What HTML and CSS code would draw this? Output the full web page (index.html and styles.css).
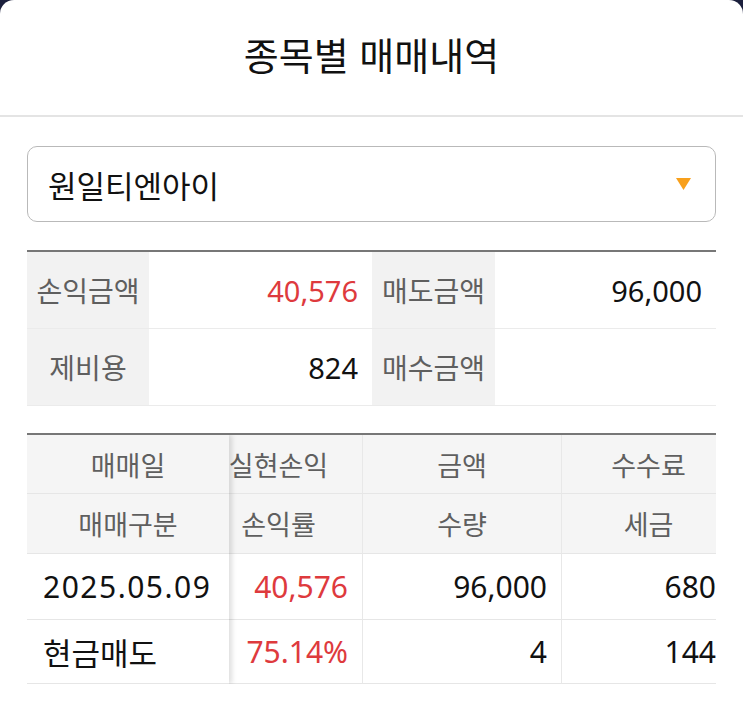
FILE: index.html
```html
<!DOCTYPE html>
<html lang="ko">
<head>
<meta charset="utf-8">
<link rel="stylesheet" href="styles.css">
</head>
<body>
<div class="sheet">
  <header class="title-bar"><h1 class="title">종목별 매매내역</h1></header>

  <div class="select">
    <span class="select-text">원일티엔아이</span>
    <svg class="caret" width="15" height="12" viewBox="0 0 15 12"><polygon points="0,0 15,0 7.5,12" fill="#f8a01c"/></svg>
  </div>

  <div class="summary">
    <div class="s-label">손익금액</div>
    <div class="s-value red">40,576</div>
    <div class="s-label">매도금액</div>
    <div class="s-value">96,000</div>
    <div class="s-label">제비용</div>
    <div class="s-value">824</div>
    <div class="s-label">매수금액</div>
    <div class="s-value"></div>
  </div>

  <div class="detail">
    <div class="fixed">
      <div class="cell head h1 center">매매일</div>
      <div class="cell head h2 center">매매구분</div>
      <div class="cell data d1 left num date">2025.05.09</div>
      <div class="cell data d2 left kr">현금매도</div>
    </div>
    <div class="scroll">
      <div class="scroll-inner">
        <div class="cell head h1 center">실현손익</div>
        <div class="cell head h1 center vl">금액</div>
        <div class="cell head h1 center vl">수수료</div>
        <div class="cell head h2 center">손익률</div>
        <div class="cell head h2 center vl">수량</div>
        <div class="cell head h2 center vl">세금</div>
        <div class="cell data d1 right num red">40,576</div>
        <div class="cell data d1 right num vl">96,000</div>
        <div class="cell data d1 right num vl pr">680</div>
        <div class="cell data d2 right num red">75.14%</div>
        <div class="cell data d2 right num vl">4</div>
        <div class="cell data d2 right num vl pr">144</div>
      </div>
    </div>
  </div>
</div>
</body>
</html>
```

FILE: styles.css
```css
html {
  background: #1b1f3c;
}
body {
  margin: 0;
  font-family: "Noto Sans", "Noto Sans CJK KR", sans-serif;
  color: #111;
}
.sheet {
  background: #fff;
  border-radius: 14px 14px 0 0;
  min-height: 717px;
  overflow: hidden;
}
.title-bar {
  height: 115px;
  border-bottom: 2px solid #e4e4e4;
  display: flex;
  align-items: center;
  justify-content: center;
}
.title {
  margin: 0;
  font-family: "Noto Sans CJK KR", sans-serif;
  font-size: 38px;
  font-weight: 400;
  color: #111;
  padding-bottom: 8px;
}
.select {
  margin: 29px 27px 0;
  height: 76px;
  box-sizing: border-box;
  border: 1.5px solid #b9b9b9;
  border-radius: 10px;
  display: flex;
  align-items: center;
  justify-content: space-between;
  padding: 0 24px 0 20px;
}
.select-text {
  font-family: "Noto Sans CJK KR", sans-serif;
  font-size: 31px;
  color: #111;
}
.caret {
  display: block;
}
.summary {
  margin: 28px 27px 0;
  border-top: 2px solid #777;
  display: grid;
  grid-template-columns: 122px 223px 123px 221px;
  grid-auto-rows: 77px;
}
.s-label, .s-value {
  border-bottom: 1px solid #ebebeb;
  display: flex;
  align-items: center;
}
.s-label {
  background: #f2f2f2;
  justify-content: center;
  font-family: "Noto Sans CJK KR", sans-serif;
  font-size: 28px;
  color: #5f5f5f;
}
.s-value {
  justify-content: flex-end;
  padding-right: 14px;
  font-size: 29px;
  color: #111;
}
.red {
  color: #de3a3d;
}
.detail {
  margin: 27px 27px 0;
  border-top: 2px solid #777;
  display: flex;
  overflow: hidden;
}
.fixed {
  width: 202px;
  flex-shrink: 0;
  position: relative;
  z-index: 1;
  background: #fff;
  box-shadow: 3px 0 5px rgba(0, 0, 0, 0.13);
}
.scroll {
  flex: 1;
  overflow: hidden;
}
.scroll-inner {
  margin-left: -34px;
  width: 540px;
  display: grid;
  grid-template-columns: 167px 199px 174px;
}
.cell {
  display: flex;
  align-items: center;
  border-bottom: 1px solid #e6e6e6;
  box-sizing: border-box;
}
.head {
  background: #f5f5f5;
  font-family: "Noto Sans CJK KR", sans-serif;
  font-size: 27px;
  color: #5f5f5f;
}
.h1 { height: 59px; }
.h2 { height: 60px; }
.d1 { height: 66px; }
.d2 { height: 64px; }
.center { justify-content: center; }
.left { justify-content: flex-start; padding-left: 16px; }
.right { justify-content: flex-end; padding-right: 14px; }
.pr { padding-right: 19px; }
.vl { border-left: 1px solid #e8e8e8; }
.data {
  background: #fff;
  color: #111;
}
.num {
  font-size: 30px;
}
.date {
  letter-spacing: 1.5px;
}
.data.red { color: #de3a3d; }
.kr {
  font-family: "Noto Sans CJK KR", sans-serif;
  font-size: 31px;
}
```
